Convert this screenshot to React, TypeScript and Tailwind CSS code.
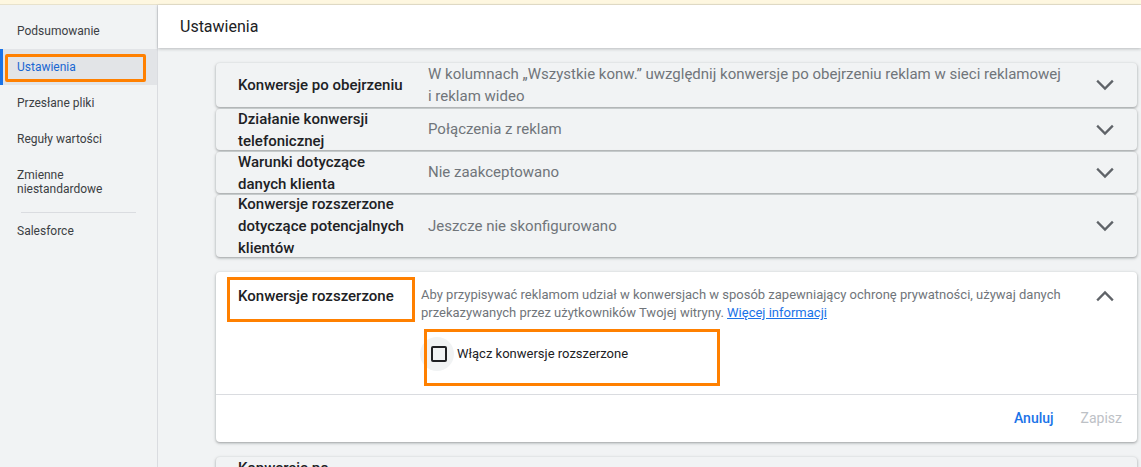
import React from "react";

// --- small drawing helpers ---
const Chevron: React.FC<{ up?: boolean }> = ({ up }) => (
  <svg width="28" height="28" viewBox="0 0 24 24" fill="none">
    <polyline
      points={up ? "6 15 12 9 18 15" : "6 9 12 15 18 9"}
      stroke="#5f6368"
      strokeWidth="2"
      strokeLinecap="square"
    />
  </svg>
);

const navItems = [
  { label: "Podsumowanie" },
  { label: "Ustawienia", active: true },
  { label: "Przesłane pliki" },
  { label: "Reguły wartości" },
];

const rows: { title: React.ReactNode; value: React.ReactNode; h: string }[] = [
  {
    title: "Konwersje po obejrzeniu",
    value: (
      <>
        W kolumnach „Wszystkie konw.” uwzględnij konwersje po obejrzeniu reklam w sieci reklamowej
        <br />i reklam wideo
      </>
    ),
    h: "h-[44px]",
  },
  {
    title: (
      <>
        Działanie konwersji
        <br />
        telefonicznej
      </>
    ),
    value: "Połączenia z reklam",
    h: "h-[41px]",
  },
  {
    title: (
      <>
        Warunki dotyczące
        <br />
        danych klienta
      </>
    ),
    value: "Nie zaakceptowano",
    h: "h-[41px]",
  },
  {
    title: (
      <>
        Konwersje rozszerzone
        <br />
        dotyczące potencjalnych
        <br />
        klientów
      </>
    ),
    value: "Jeszcze nie skonfigurowano",
    h: "h-[62px]",
  },
];

const cardShadow =
  "shadow-[0_1px_2px_rgba(60,64,67,0.3),0_1px_3px_1px_rgba(60,64,67,0.15)]";

const CollapsedRow: React.FC<{
  title: React.ReactNode;
  value: React.ReactNode;
  h: string;
  className?: string;
}> = ({ title, value, h, className }) => (
  <div
    className={`flex items-center bg-[#f1f3f4] rounded-[4px] ${cardShadow} ${h} ${className ?? ""}`}
  >
    <div className="w-[190px] pl-[22px] shrink-0 box-content text-[15px] leading-[22px] font-medium text-[#202124]">
      {title}
    </div>
    <div className="flex-1 text-[15px] leading-[22px] text-[#70757a] -mt-[1px]">{value}</div>
    <div className="w-[28px] h-[28px] mr-[18px] shrink-0">
      <Chevron />
    </div>
  </div>
);

export default function App() {
  return (
    <div
      className="w-[1141px] h-[467px] overflow-hidden bg-[#f1f3f4] flex flex-col"
      style={{ fontFamily: "Roboto, 'Liberation Sans', sans-serif" }}
    >
      {/* notice strip */}
      <div className="h-[5px] bg-[#fef7e0] border-b border-[#e8e2cc] shrink-0" />

      <div className="flex flex-1 min-h-0">
        {/* --- Sidebar --- */}
        <nav className="relative w-[158px] shrink-0 border-r border-[#dadce0] pt-[8px] text-[12px] text-[#3c4043]">
          {navItems.map((item) => (
            <div
              key={item.label}
              className={`relative h-[36px] flex items-center pl-[17px] ${
                item.active ? "bg-[#e2e4e7] text-[#1967d2]" : ""
              }`}
            >
              {item.active && (
                <span className="absolute left-0 top-0 bottom-0 w-[3px] bg-[#1a73e8]" />
              )}
              {item.label}
            </div>
          ))}
          <div className="h-[50px] flex items-center pl-[17px] leading-[14px]">
            Zmienne
            <br />
            niestandardowe
          </div>
          <div className="mt-[5px] mx-[21px] h-px bg-[#dadce0]" />
          <div className="h-[36px] flex items-center pl-[17px]">Salesforce</div>

          {/* annotation */}
          <div className="absolute left-[5px] top-[49px] w-[141px] h-[28px] border-[3px] border-[#ff8000] rounded-[2px] pointer-events-none" />
        </nav>

        {/* --- Main --- */}
        <main className="flex-1 flex flex-col min-w-0">
          <header className="h-[43px] shrink-0 bg-white flex items-center pl-[22px] text-[16px] text-[#202124] shadow-[0_1px_3px_rgba(60,64,67,0.3)] relative z-10">
            Ustawienia
          </header>

          <div className="pt-[15px] ml-[58px] mr-[4px] flex flex-col">
            {rows.map((r, i) => (
              <CollapsedRow
                key={i}
                title={r.title}
                value={r.value}
                h={r.h}
                className={i > 0 ? "mt-[2px]" : ""}
              />
            ))}

            {/* expanded card */}
            <div className={`relative mt-[15px] bg-white rounded-[4px] ${cardShadow}`}>
              <div className="flex">
                <div className="w-[183px] pl-[22px] pt-[14px] shrink-0 box-content text-[15px] leading-[20px] font-medium text-[#202124]">
                  Konwersje rozszerzone
                </div>
                <div className="flex-1 pt-[14px] pb-[23px]">
                  <p className="text-[13px] leading-[18px] text-[#70757a]">
                    Aby przypisywać reklamom udział w konwersjach w sposób zapewniający ochronę prywatności, używaj danych
                    <br />
                    przekazywanych przez użytkowników Twojej witryny.{" "}
                    <a className="text-[#1a73e8] underline">Więcej informacji</a>
                  </p>
                  <div className="mt-[15px] flex items-center -ml-[1px]">
                    <div className="w-[34px] h-[34px] rounded-full bg-[#f1f3f4] flex items-center justify-center">
                      <div className="w-[16px] h-[16px] border-2 border-[#202124] rounded-[2px] ml-[3px]" />
                    </div>
                    <span className="ml-[3px] text-[13px] text-[#202124]">
                      Włącz konwersje rozszerzone
                    </span>
                  </div>
                </div>
                <div className="w-[28px] h-[28px] mr-[18px] mt-[10px] shrink-0">
                  <Chevron up />
                </div>
              </div>
              <div className="h-px bg-[#dadce0]" />
              <div className="h-[47px] flex items-center justify-end pr-[15px] gap-[27px] text-[14px] font-medium">
                <span className="text-[#1a73e8]">Anuluj</span>
                <span className="text-[#bdc1c6] font-normal">Zapisz</span>
              </div>

              {/* annotations */}
              <div className="absolute left-[11px] top-[5px] w-[188px] h-[45px] border-[3px] border-[#ff8000] pointer-events-none" />
              <div className="absolute left-[208px] top-[57px] w-[296px] h-[57px] border-[3px] border-[#ff8000] pointer-events-none" />
            </div>

            <CollapsedRow
              title={
                <>
                  Konwersje po
                  <br />
                  zaangażowaniu
                </>
              }
              value="Wyłączone"
              h="h-[44px]"
              className="mt-[15px]"
            />
          </div>
        </main>
      </div>
    </div>
  );
}
